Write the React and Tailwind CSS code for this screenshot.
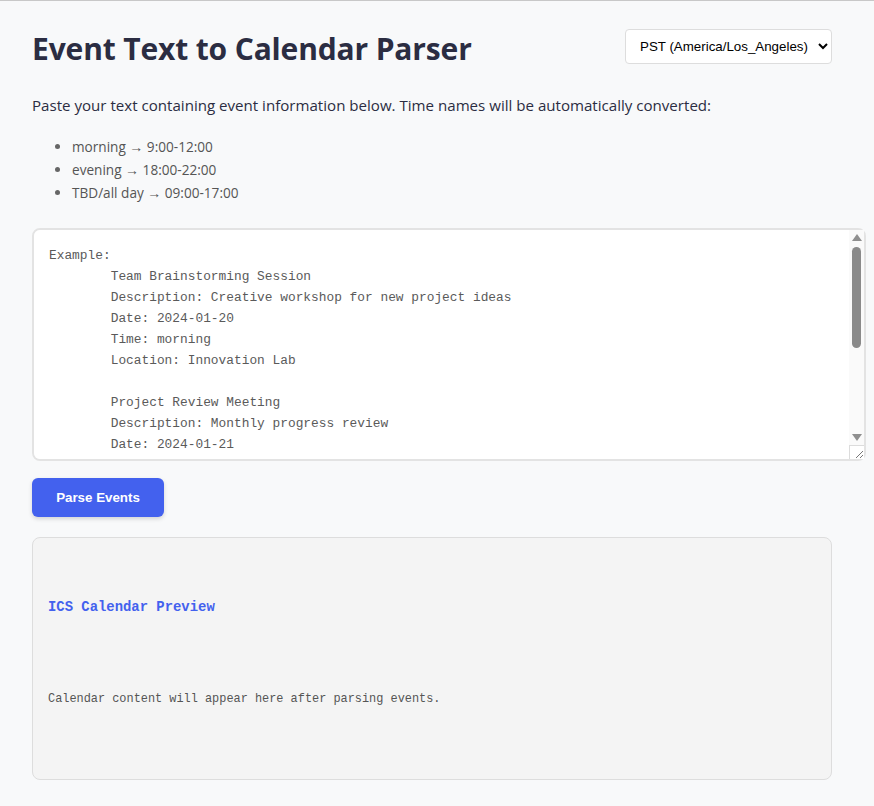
import React from "react";

const sample = `Example:
        Team Brainstorming Session
        Description: Creative workshop for new project ideas
        Date: 2024-01-20
        Time: morning
        Location: Innovation Lab

        Project Review Meeting
        Description: Monthly progress review
        Date: 2024-01-21
        Time: evening
        Location: Conference Room B

        Company Offsite
        Description: Annual team building
        Date: 2024-01-25
        Time: TBD`;

function FakeScrollbar() {
  return (
    <div className="pointer-events-none absolute right-[2px] top-[2px] bottom-[2px] w-[15px] flex flex-col bg-[#fafafa]">
      <div className="h-[15px] flex items-center justify-center">
        <svg width="10" height="7" viewBox="0 0 10 7">
          <path d="M5 0 L10 7 L0 7 Z" fill="#8f8f8f" />
        </svg>
      </div>
      <div className="flex-1 pt-[2px] px-[3px]">
        <div className="h-[101px] w-[9px] rounded-[5px] bg-[#8a8a8a]" />
      </div>
      <div className="h-[15px] flex items-center justify-center">
        <svg width="10" height="7" viewBox="0 0 10 7">
          <path d="M0 0 L10 0 L5 7 Z" fill="#8f8f8f" />
        </svg>
      </div>
      <div className="h-[14px] border-t border-l border-[#dcdcdc] bg-white flex items-end justify-end">
        <svg width="10" height="10" viewBox="0 0 10 10">
          <path d="M9 2 L2 9 M9 6 L6 9" stroke="#777" strokeWidth="1" />
        </svg>
      </div>
    </div>
  );
}

function Arrow() {
  return <span className="font-['Liberation_Sans',sans-serif] text-[14px] leading-none">→</span>;
}

export default function App() {
  return (
    <div className="min-h-[806px] bg-[#f8f9fa] border-t border-[#c8c8c8] px-8 font-['Open_Sans',sans-serif] text-[#2b2d42]">
      <div className="w-[800px]">
        <div className="flex items-start justify-between pt-[28px]">
          <h1 className="text-[30px] leading-[40px] font-bold text-[#2b2d42] tracking-[-0.15px]">
            Event Text to Calendar Parser
          </h1>
          <select className="h-[35px] w-[207px] bg-white border border-[#ddd] rounded-[4px] pl-[10px] pr-1 text-[13.33px] text-black font-['Liberation_Sans',Arial,sans-serif]">
            <option>PST (America/Los_Angeles)</option>
          </select>
        </div>
        <p className="mt-[24px] text-[15.1px] leading-[24px] text-[#2b2d42]">
          Paste your text containing event information below. Time names will be automatically converted:
        </p>
        <ul className="mt-[18px] list-disc pl-[40px] text-[13.6px] leading-[23px] text-[#555] marker:text-[#666]">
          <li className="h-[23px]">morning <Arrow /> 9:00-12:00</li>
          <li className="h-[23px]">evening <Arrow /> 18:00-22:00</li>
          <li className="h-[23px]">TBD/all day <Arrow /> 09:00-17:00</li>
        </ul>
        <div className="relative mt-[24px] w-[834px]">
          <textarea
            className="block w-[834px] h-[233px] bg-white border-2 border-[#e3e3e3] rounded-[8px] pl-[15px] pr-[20px] pt-[15px] pb-[10px] font-['Liberation_Mono',monospace] text-[12.85px] leading-[21px] text-[#5a5a5a] resize-none outline-none"
            defaultValue={sample}
          />
          <FakeScrollbar />
        </div>
        <button className="mt-[17px] h-[39px] w-[132px] rounded-[6px] bg-[#4361ee] text-white font-bold text-[13.33px] font-['Liberation_Sans',Arial,sans-serif] shadow-[0_2px_4px_rgba(0,0,0,0.15)]">
          Parse Events
        </button>
        <div className="mt-[20px] h-[243px] bg-[#f4f4f4] border border-[#ddd] rounded-[8px] px-[15px] font-['Liberation_Mono',monospace]">
          <div className="pt-[61px] text-[#4361ee] font-bold text-[13.9px] leading-[17px]">
            ICS Calendar Preview
          </div>
          <div className="mt-[75px] text-[11.9px] leading-[17px] text-[#555]">
            Calendar content will appear here after parsing events.
          </div>
        </div>
      </div>
    </div>
  );
}
